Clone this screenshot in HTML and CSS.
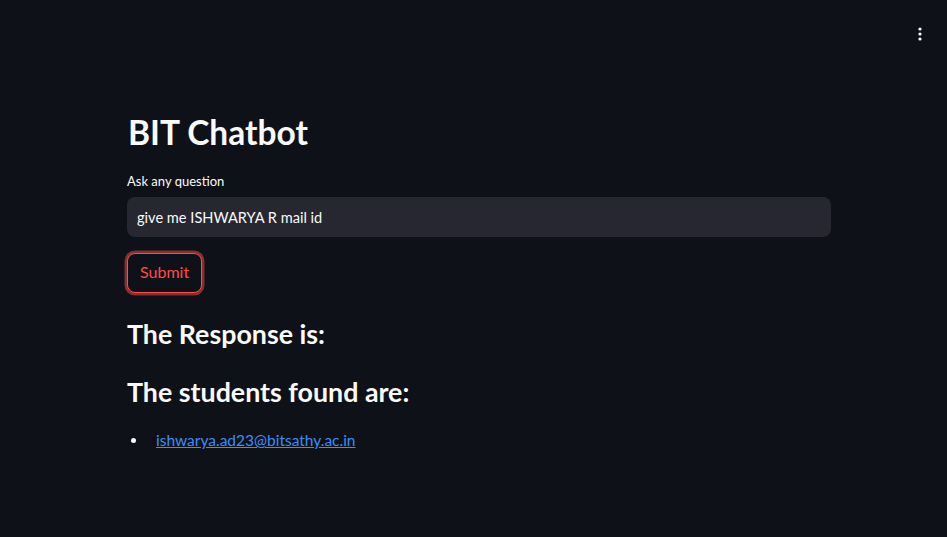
FILE: index.html
```html
<!DOCTYPE html>
<html lang="en">
<head>
<meta charset="utf-8">
<title>BIT Chatbot</title>
<link rel="stylesheet" href="styles.css">
</head>
<body>
<header class="topbar">
  <button class="menu" aria-label="Main menu">
    <svg width="4" height="14" viewBox="0 0 4 14"><circle cx="2" cy="2" r="1.6" fill="#fafafa"/><circle cx="2" cy="7" r="1.6" fill="#fafafa"/><circle cx="2" cy="12" r="1.6" fill="#fafafa"/></svg>
  </button>
</header>
<main class="main">
  <div class="block">
    <h1 class="title">BIT Chatbot</h1>
    <label class="label" for="q">Ask any question</label>
    <input class="input" id="q" type="text" value="give me ISHWARYA R mail id">
    <button class="submit">Submit</button>
    <h3 class="h3 first">The Response is:</h3>
    <h3 class="h3">The students found are:</h3>
    <ul class="list">
      <li class="item"><a href="#" class="link">ishwarya.ad23@bitsathy.ac.in</a></li>
    </ul>
  </div>
</main>
</body>
</html>
```
FILE: styles.css
```css
* { box-sizing: border-box; }
html, body {
  margin: 0;
  height: 100%;
  background: #0e1117;
  color: #fafafa;
  font-family: Lato, "Noto Sans", sans-serif;
}
.topbar {
  height: 60px;
  display: flex;
  justify-content: flex-end;
  align-items: center;
  padding-right: 20px;
}
.menu {
  background: none;
  border: none;
  width: 14px;
  height: 28px;
  display: flex;
  align-items: center;
  justify-content: center;
  padding: 0;
  margin-top: 8px;
}
.main {
  padding-left: 127px;
  padding-right: 116px;
}
.block {
  width: 704px;
  display: flex;
  flex-direction: column;
  align-items: flex-start;
}
.title {
  font-size: 33.5px;
  font-weight: 700;
  margin: 47px 0 0 1px;
  line-height: 50px;
}
.label {
  font-size: 13px;
  margin-top: 16px;
  line-height: 16px;
}
.input {
  margin-top: 8px;
  width: 704px;
  height: 40px;
  background: #262730;
  border: none;
  border-radius: 8px;
  color: #fafafa;
  font-family: inherit;
  font-size: 14.6px;
  padding: 0 10px;
  outline: none;
}
.submit {
  margin-top: 16px;
  height: 40px;
  padding: 0 12px 3px;
  background: #0e1117;
  border: 1.5px solid #ff4b4b;
  border-radius: 8px;
  box-shadow: 0 0 0 2.5px rgba(255, 75, 75, 0.5);
  color: #ff4b4b;
  font-family: inherit;
  font-size: 16px;
}
.h3 {
  font-size: 26.8px;
  font-weight: 700;
  margin: 0;
  line-height: 40px;
}
.first { margin-top: 21px; }
.h3 + .h3 { margin-top: 18px; }
.list {
  margin: 17px 0 0;
  padding: 0 0 0 4px;
  list-style: none;
  font-size: 15.5px;
}
.item {
  display: flex;
  align-items: center;
  line-height: 22px;
}
.item::before {
  content: "";
  width: 5px;
  height: 5px;
  border-radius: 50%;
  background: #fafafa;
  margin-right: 20px;
  margin-top: 1px;
}
.link {
  color: #3a8ef6;
}
```
